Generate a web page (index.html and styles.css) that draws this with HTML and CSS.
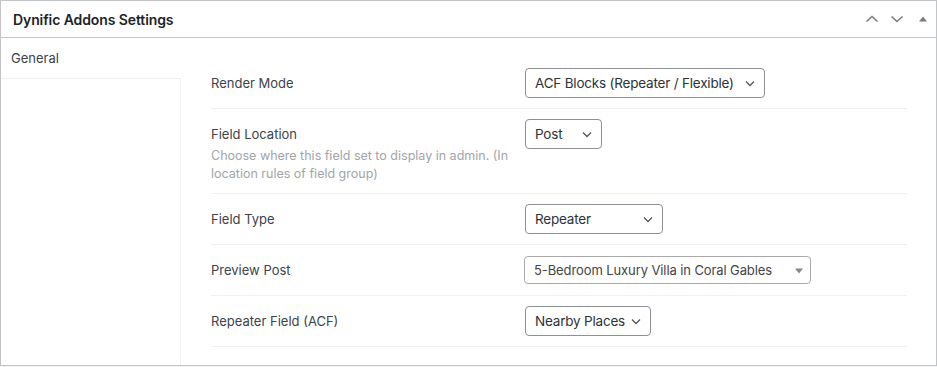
FILE: index.html
```html
<!DOCTYPE html>
<html lang="en">
<head>
<meta charset="utf-8">
<title>Dynific Addons Settings</title>
<link rel="stylesheet" href="styles.css">
</head>
<body>
<div class="postbox">
  <div class="postbox-header">
    <h2 class="title">Dynific Addons Settings</h2>
    <div class="handle-actions">
      <button class="handle-btn" aria-label="Move up">
        <svg width="16" height="16" viewBox="0 0 16 16"><polyline points="2.5,10.5 8,5.5 13.5,10.5" fill="none" stroke="#787c82" stroke-width="1.6"/></svg>
      </button>
      <button class="handle-btn" aria-label="Move down">
        <svg width="16" height="16" viewBox="0 0 16 16"><polyline points="2.5,5.5 8,10.5 13.5,5.5" fill="none" stroke="#787c82" stroke-width="1.6"/></svg>
      </button>
      <button class="handle-btn" aria-label="Toggle panel">
        <svg width="10" height="10" viewBox="0 0 10 10"><polygon points="1,7.5 5,2.5 9,7.5" fill="#787c82"/></svg>
      </button>
    </div>
  </div>
  <div class="postbox-body">
    <ul class="tabs">
      <li class="tab active">General</li>
    </ul>
    <div class="panel">
      <div class="row">
        <div class="label-col"><div class="label">Render Mode</div></div>
        <div class="field-col">
          <div class="select w-mode"><span>ACF Blocks (Repeater / Flexible)</span>
            <svg class="chev" width="16" height="16" viewBox="0 0 16 16"><polyline points="4,6.5 8,10.5 12,6.5" fill="none" stroke="#50575e" stroke-width="1.3"/></svg>
          </div>
        </div>
      </div>
      <div class="row">
        <div class="label-col">
          <div class="label">Field Location</div>
          <p class="desc">Choose where this field set to display in admin. (In location rules of field group)</p>
        </div>
        <div class="field-col">
          <div class="select w-post"><span>Post</span>
            <svg class="chev" width="16" height="16" viewBox="0 0 16 16"><polyline points="4,6.5 8,10.5 12,6.5" fill="none" stroke="#50575e" stroke-width="1.3"/></svg>
          </div>
        </div>
      </div>
      <div class="row">
        <div class="label-col"><div class="label">Field Type</div></div>
        <div class="field-col">
          <div class="select w-type"><span>Repeater</span>
            <svg class="chev" width="16" height="16" viewBox="0 0 16 16"><polyline points="4,6.5 8,10.5 12,6.5" fill="none" stroke="#50575e" stroke-width="1.3"/></svg>
          </div>
        </div>
      </div>
      <div class="row">
        <div class="label-col"><div class="label">Preview Post</div></div>
        <div class="field-col">
          <div class="select2"><span>5-Bedroom Luxury Villa in Coral Gables</span>
            <svg class="tri" width="10" height="6" viewBox="0 0 10 6"><polygon points="1,0.5 9,0.5 5,5.5" fill="#888"/></svg>
          </div>
        </div>
      </div>
      <div class="row">
        <div class="label-col"><div class="label">Repeater Field (ACF)</div></div>
        <div class="field-col">
          <div class="select w-rep"><span>Nearby Places</span>
            <svg class="chev" width="16" height="16" viewBox="0 0 16 16"><polyline points="4,6.5 8,10.5 12,6.5" fill="none" stroke="#50575e" stroke-width="1.3"/></svg>
          </div>
        </div>
      </div>
    </div>
  </div>
</div>
</body>
</html>
```
FILE: styles.css
```css
* { box-sizing: border-box; }
html, body { margin: 0; padding: 0; }
body {
  background: #f0f0f1;
  font-family: Inter, "Open Sans", "Liberation Sans", sans-serif;
  color: #3c434a;
  font-size: 13px;
}
.postbox {
  width: 937px;
  height: 366px;
  background: #fff;
  border: 1px solid #c3c4c7;
  display: flex;
  flex-direction: column;
}
.postbox-header {
  height: 37px;
  border-bottom: 1px solid #c3c4c7;
  display: flex;
  align-items: center;
  justify-content: space-between;
  flex-shrink: 0;
}
.title {
  margin: 0;
  padding: 0 12px;
  font-size: 14px;
  font-weight: 600;
  color: #1d2327;
  letter-spacing: -0.1px;
}
.handle-actions {
  display: flex;
  align-items: center;
}
.handle-btn {
  width: 25px;
  height: 36px;
  border: 0;
  background: transparent;
  padding: 0;
  display: flex;
  align-items: center;
  justify-content: center;
}
.handle-btn:last-child { width: 27px; }
.postbox-body {
  flex: 1;
  display: flex;
}
.tabs {
  list-style: none;
  margin: 0;
  padding: 0;
  width: 180px;
  border-right: 1px solid #f0f0f0;
  flex-shrink: 0;
}
.tab {
  height: 41px;
  padding: 0 10px;
  display: flex;
  align-items: center;
  border-bottom: 1px solid #eeeeee;
  margin-right: -1px;
  background: #fff;
  color: #3c434a;
  font-size: 13px;
}
.panel {
  flex: 1;
  padding: 20px 29px 0 30px;
}
.row {
  display: flex;
  padding: 10px 0;
  border-bottom: 1px solid #f0f0f0;
}
.label-col {
  width: 314px;
  flex-shrink: 0;
  padding-right: 6px;
}
.label {
  line-height: 30px;
  font-size: 13px;
  color: #3c434a;
}
.desc {
  margin: -2px 0 0;
  line-height: 18px;
  font-size: 12.5px;
  color: #a0a5aa;
}
.field-col {
  flex: 1;
}
.select {
  height: 30px;
  border: 1px solid #8c8f94;
  border-radius: 4px;
  padding: 0 22px 0 9px;
  display: flex;
  align-items: center;
  position: relative;
  font-size: 13.5px;
  letter-spacing: -0.2px;
  white-space: nowrap;
  color: #2c3338;
  background: #fff;
}
.select .chev {
  position: absolute;
  right: 6px;
  top: 6px;
}
.w-mode { width: 240px; }
.w-post { width: 77px; }
.w-type { width: 138px; }
.w-rep { width: 126px; }
.select2 {
  width: 287px;
  height: 28px;
  margin: 1px 0 0 -1px;
  border: 1px solid #aaaaaa;
  border-radius: 4px;
  padding: 0 24px 0 9px;
  display: flex;
  align-items: center;
  position: relative;
  font-size: 13px;
  letter-spacing: -0.1px;
  white-space: nowrap;
  color: #444;
  background: #fff;
}
.select2 .tri {
  position: absolute;
  right: 6px;
  top: 11px;
}
```
